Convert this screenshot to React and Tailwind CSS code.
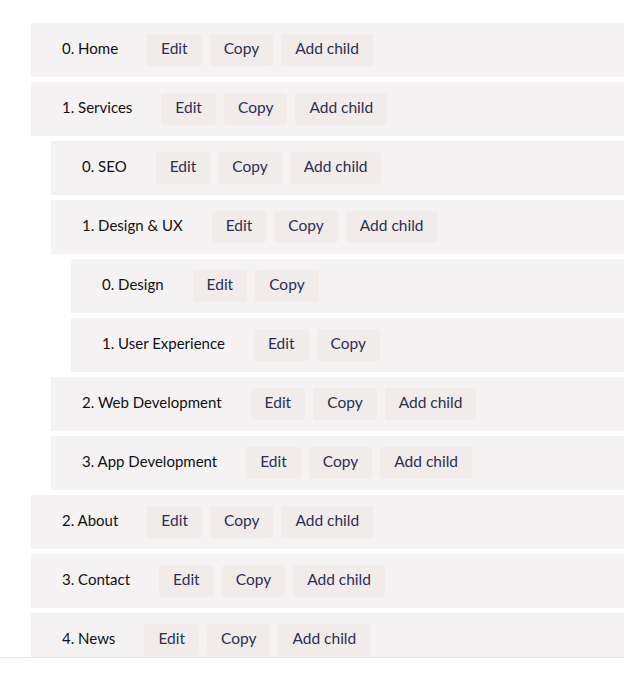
const items = [
  { label: '0. Home', depth: 0, canAdd: true },
  { label: '1. Services', depth: 0, canAdd: true },
  { label: '0. SEO', depth: 1, canAdd: true },
  { label: '1. Design & UX', depth: 1, canAdd: true },
  { label: '0. Design', depth: 2, canAdd: false },
  { label: '1. User Experience', depth: 2, canAdd: false },
  { label: '2. Web Development', depth: 1, canAdd: true },
  { label: '3. App Development', depth: 1, canAdd: true },
  { label: '2. About', depth: 0, canAdd: true },
  { label: '3. Contact', depth: 0, canAdd: true },
  { label: '4. News', depth: 0, canAdd: true },
];

const INDENT = ['ml-0', 'ml-[20px]', 'ml-[40px]'];

const Btn = ({ children }) => (
  <button className="h-[32px] px-[14px] pb-[3px] rounded-[3px] bg-[#f1ece9] text-[#2b2f55] text-[15.5px] leading-none">
    {children}
  </button>
);

const MenuTree = () => {
  return (
    <div className="h-[658px] overflow-hidden border-b border-[#e6e6e6] bg-white" style={{ fontFamily: 'Lato, "Open Sans", sans-serif' }}>
      <div className="pt-[23px] pl-[31px] flex flex-col gap-[5px]">
        {items.map((item, i) => (
          <div
            key={i}
            className={`${INDENT[item.depth]} h-[54px] bg-[#f4f2f2] flex items-center pl-[31px] gap-[8px]`}
          >
            <span className="text-[15px] leading-none text-[#111] mr-[21px] mb-[3px]">{item.label}</span>
            <Btn>Edit</Btn>
            <Btn>Copy</Btn>
            {item.canAdd && <Btn>Add child</Btn>}
          </div>
        ))}
      </div>
    </div>
  );
};

export default function App() {
  return <MenuTree />;
}
